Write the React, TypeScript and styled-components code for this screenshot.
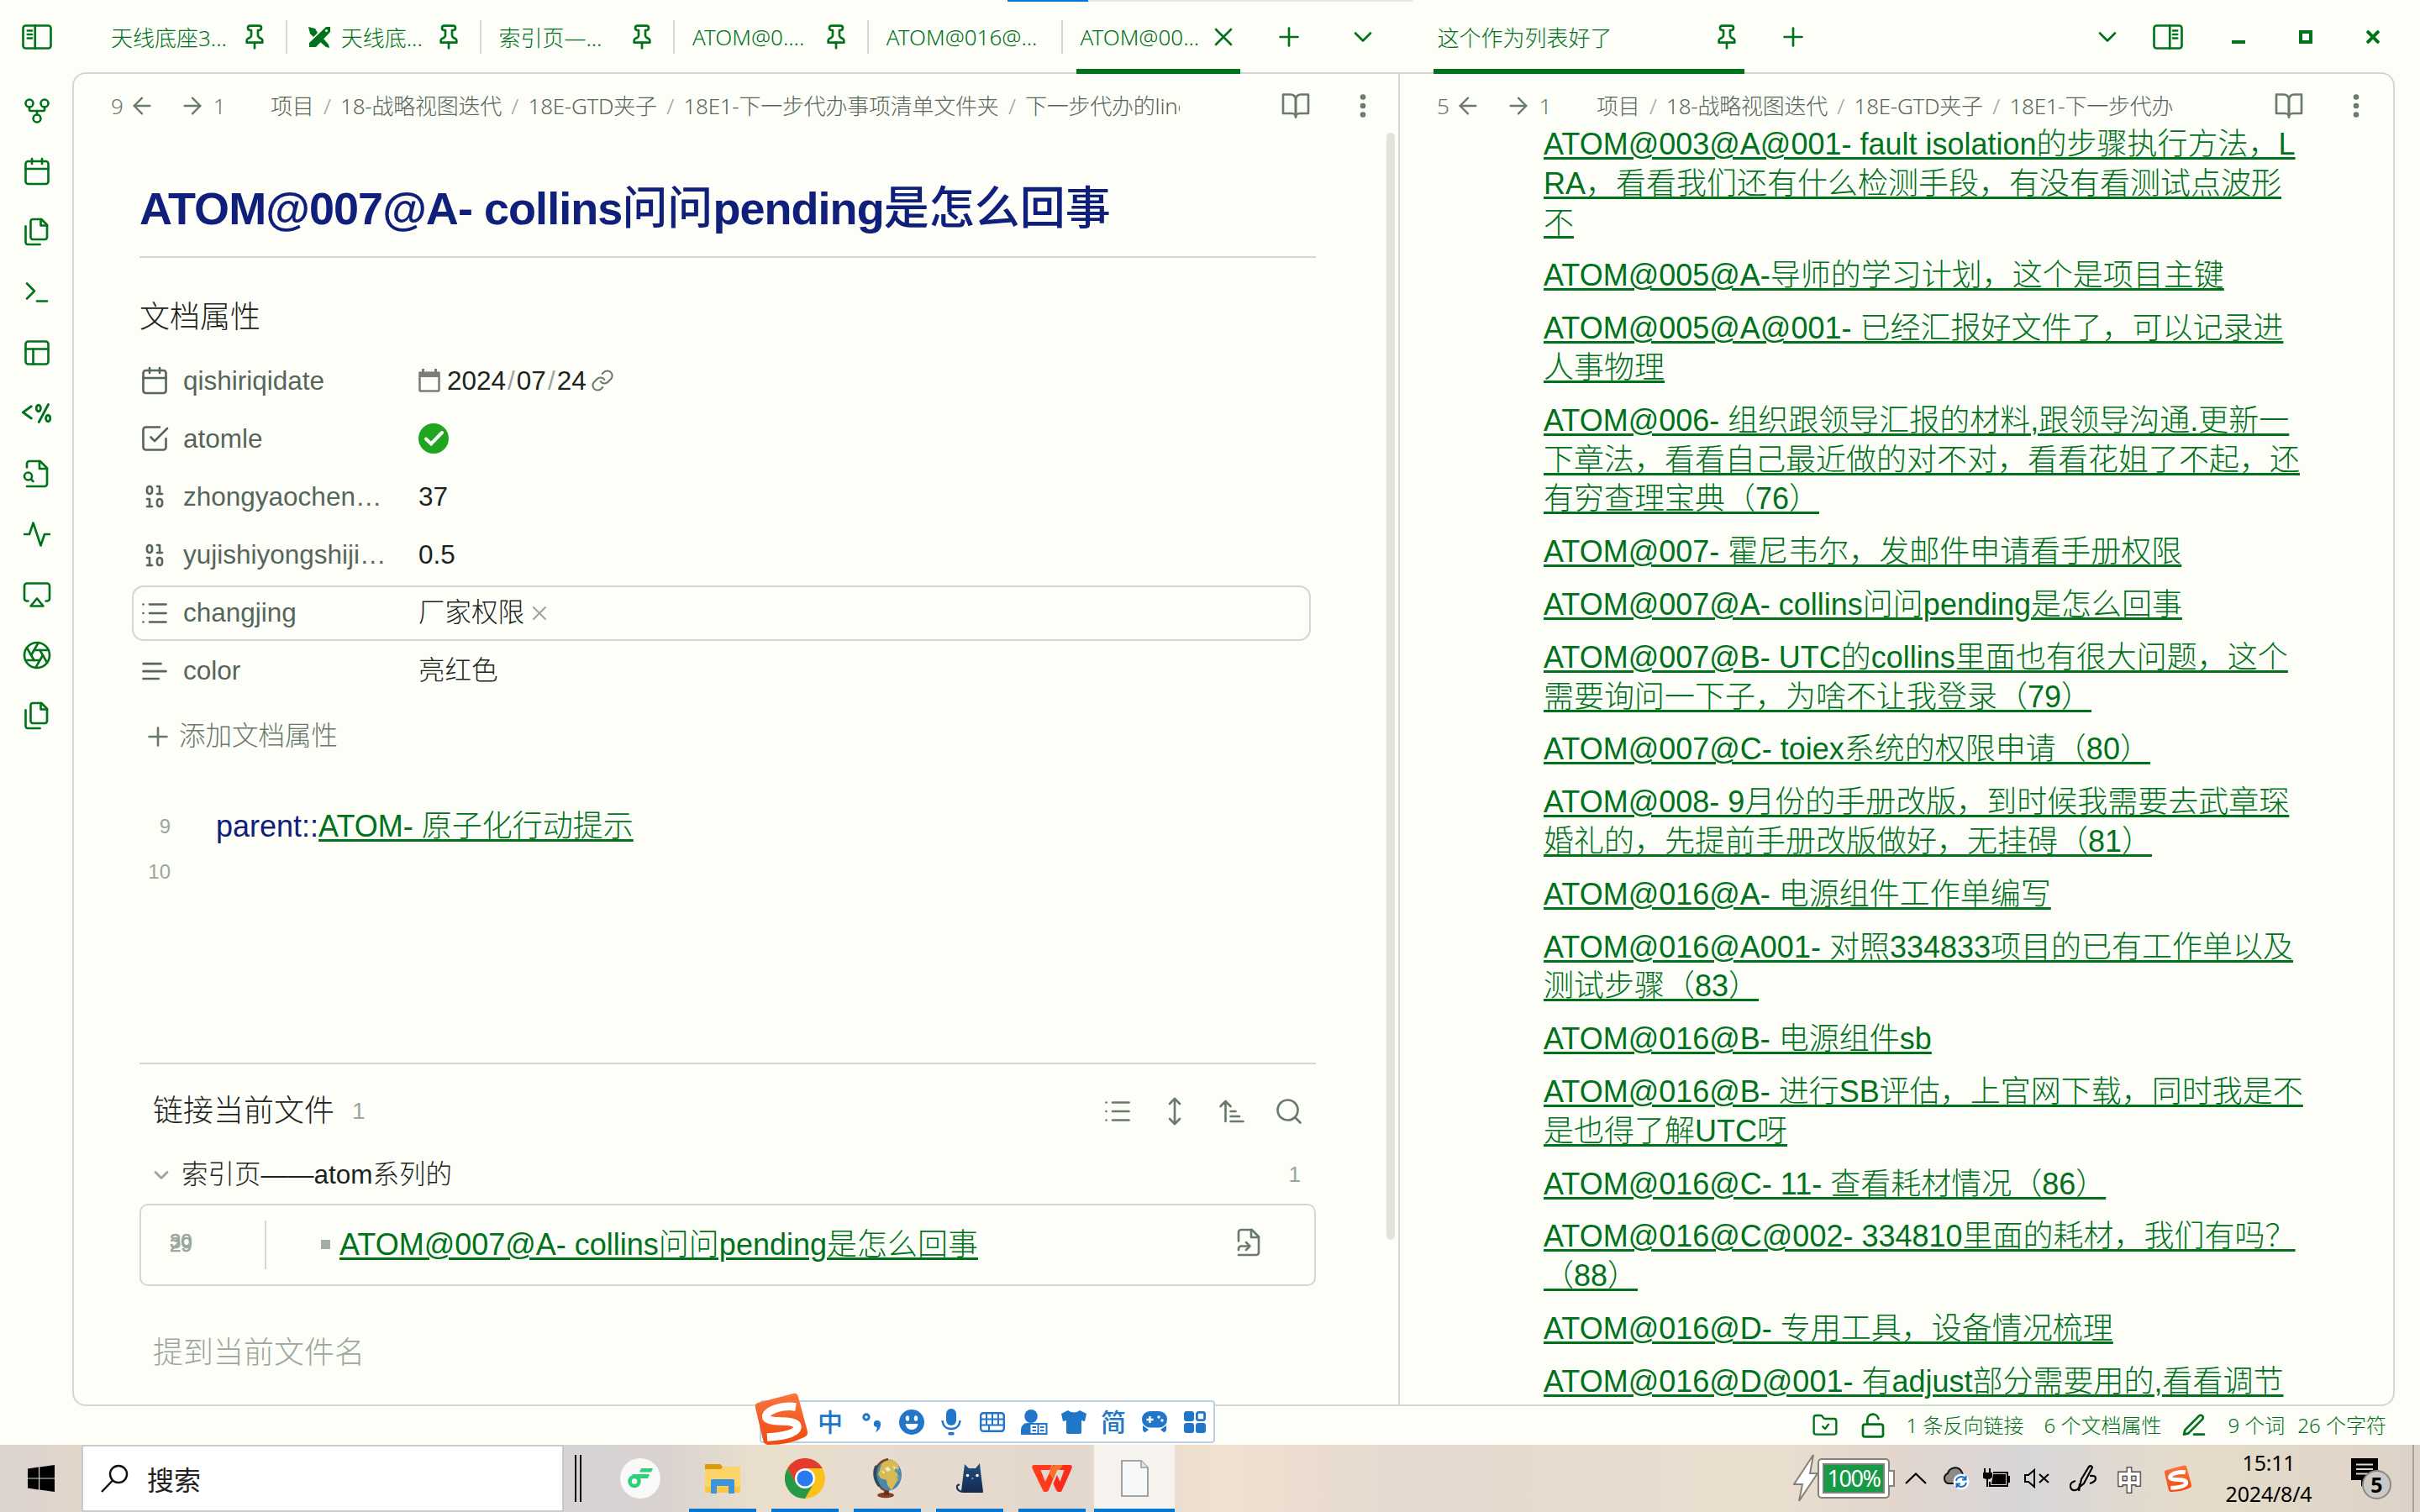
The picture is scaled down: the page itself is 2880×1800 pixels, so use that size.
import React from "react";
import styled, { createGlobalStyle } from "styled-components";
import {
  ArrowLeft,
  ArrowRight,
  Aperture,
  Binary,
  Calendar,
  ChevronDown,
  GitFork,
  Link as LinkIcon,
  List,
  LockOpen,
  MoreVertical,
  MoveVertical,
  PanelsTopLeft,
  Plus,
  Search,
  Terminal,
  X,
} from "lucide-react";

const C = {
  bg: "#fdfef8",
  green: "#00721b",
  line: "#d0d8d0",
  navy: "#10207a",
  text: "#1c241d",
  muted: "#56665a",
  icon: "#69796c",
  faint: "#9ba79d",
  blue: "#0078d7",
  ime: "#2176c9",
};

const SANS = `"Liberation Sans", "Noto Sans CJK SC", sans-serif`;
const UI = `"Noto Sans", "Noto Sans CJK SC", sans-serif`;

const Global = createGlobalStyle`
  * { box-sizing: border-box; }
  html, body { margin: 0; padding: 0; background: ${C.bg}; overflow: hidden; }
  svg { display: block; flex: none; }
`;

const Screen = styled.div`
  width: 2880px;
  height: 1800px;
  display: flex;
  flex-direction: column;
  overflow: hidden;
  background: ${C.bg};
  font-family: ${SANS};
  font-weight: 300;
  line-height: 1.3;
`;

/* ---------- icons ---------- */

type IconProps = { size?: number; sw?: number; children: React.ReactNode };
const Icon = ({ size = 36, sw = 1.75, children }: IconProps) => (
  <svg
    width={size}
    height={size}
    viewBox="0 0 24 24"
    fill="none"
    stroke="currentColor"
    strokeWidth={sw}
    strokeLinecap="round"
    strokeLinejoin="round"
  >
    {children}
  </svg>
);

const PinIcon = () => (
  <Icon size={32} sw={2}>
    <path d="M12 17v5" />
    <path d="M5 17h14v-1.76a2 2 0 0 0-1.11-1.79l-1.78-.9A2 2 0 0 1 15 10.76V6h1a2 2 0 0 0 0-4H8a2 2 0 0 0 0 4h1v4.76a2 2 0 0 1-1.11 1.79l-1.78.9A2 2 0 0 0 5 15.24Z" />
  </Icon>
);
const SidebarLeft = () => (
  <Icon>
    <rect x="1" y="3" width="22" height="18" rx="2" />
    <path d="M10.5 3v18M4.5 7H8M4.5 10H8M4.5 13H8" />
  </Icon>
);
const SidebarRight = () => (
  <Icon>
    <rect x="1" y="3" width="22" height="18" rx="2" />
    <path d="M13.5 3v18M16 7h3.5M16 10h3.5M16 13h3.5" />
  </Icon>
);
const FilesIcon = () => (
  <Icon>
    <path d="M15.5 2H8.6c-.4 0-.8.2-1.1.5-.3.3-.5.7-.5 1.1v12.8c0 .4.2.8.5 1.1.3.3.7.5 1.1.5h9.8c.4 0 .8-.2 1.1-.5.3-.3.5-.7.5-1.1V6.5L15.5 2z" />
    <path d="M3 7.6v12.8c0 .4.2.8.5 1.1.3.3.7.5 1.1.5h9.8" />
    <path d="M15 2v5h5" />
  </Icon>
);
const TemplaterIcon = () => (
  <Icon sw={1.9}>
    <path d="M7.500 6.500L0.900 11.200L7.500 16" />
    <path d="M21 5L13.500 19" />
    <ellipse cx="13.2" cy="8" rx="1.700" ry="2.500" />
    <ellipse cx="20.800" cy="16" rx="1.700" ry="2.500" />
  </Icon>
);
const FileSearchIcon = () => (
  <Icon>
    <path d="M4 22h14a2 2 0 0 0 2-2V7.5L14.5 2H6a2 2 0 0 0-2 2v3" />
    <path d="M14 2v6h6" />
    <circle cx="5" cy="14" r="3" />
    <path d="m9 18-1.5-1.5" />
  </Icon>
);
const ActivityIcon = () => (
  <Icon>
    <path d="M22 12h-4l-3 9L9 3l-3 9H2" />
  </Icon>
);
const AirplayIcon = () => (
  <Icon>
    <path d="M5 17H4a2 2 0 0 1-2-2V5a2 2 0 0 1 2-2h16a2 2 0 0 1 2 2v10a2 2 0 0 1-2 2h-1" />
    <path d="m12 15 5 6H7Z" />
  </Icon>
);
const BookIcon = () => (
  <Icon>
    <path d="M2 3h6a4 4 0 0 1 4 4v14a3 3 0 0 0-3-3H2z" />
    <path d="M22 3h-6a4 4 0 0 0-4 4v14a3 3 0 0 1 3-3h7z" />
  </Icon>
);
const CheckSquareIcon = () => (
  <Icon>
    <path d="m9 11 3 3L22 4" />
    <path d="M21 12v7a2 2 0 0 1-2 2H5a2 2 0 0 1-2-2V5a2 2 0 0 1 2-2h11" />
  </Icon>
);
const TextIcon = () => (
  <Icon>
    <path d="M17 6.1H3M21 12.1H3M15.1 18H3" />
  </Icon>
);
const SortIcon = () => (
  <Icon>
    <path d="m3 8 4-4 4 4M7 4v16M11 12h4M11 16h7M11 20h10" />
  </Icon>
);
const FileArrowIcon = () => (
  <Icon>
    <path d="M4 11V4a2 2 0 0 1 2-2h8.5L20 7.5V20a2 2 0 0 1-2 2H4" />
    <path d="M14 2v6h6" />
    <path d="m10 18 3-3-3-3" />
    <path d="M4 18v-1a2 2 0 0 1 2-2h6" />
  </Icon>
);
const CrossToolsIcon = () => (
  <svg width="28" height="28" viewBox="0 0 28 28" fill="currentColor">
    <path d="M1 2l8 2 3 5-5 5-4-4z" />
    <path d="M22 2h5v6L10 26H2v-5z" />
    <path d="M19 16l6 7 1 4-4-1-7-6z" />
    <circle cx="22.5" cy="6.5" r="1.5" fill={C.bg} />
  </svg>
);

/* ---------- title bar ---------- */

const TitleBar = styled.header`
  position: relative;
  z-index: 1;
  height: 88px;
  flex: none;
  display: flex;
  align-items: stretch;
  color: ${C.green};
  font: 300 26px ${UI};
`;

const LoadingBar = styled.div`
  position: absolute;
  top: 0;
  left: 1199px;
  width: 482px;
  height: 2px;
  background: linear-gradient(90deg, ${C.blue} 96px, #e5e5e3 96px);
`;

const Slot = styled.div<{ $w: number }>`
  width: ${(p) => p.$w}px;
  flex: none;
  display: flex;
  align-items: center;
  justify-content: center;
`;

const TabStrip = styled.div`
  display: flex;
  padding-left: 39.5px;
`;

const Tab = styled.div`
  width: 230.7px;
  flex: none;
  display: flex;
  align-items: center;
  padding-left: 4.5px;
`;

const ActiveTab = styled(Tab)<{ $w: number }>`
  width: ${(p) => p.$w}px;
  border-bottom: 6px solid ${C.green};
  padding-top: 6px;
`;

const TabText = styled.div<{ $w: number; $lead?: boolean }>`
  width: ${(p) => p.$w}px;
  padding-left: ${(p) => (p.$lead ? 3 : 0)}px;
  display: flex;
  align-items: center;
  gap: 12px;
  white-space: nowrap;
`;

const TabSep = styled.div`
  width: 2px;
  height: 40px;
  margin-left: 21px;
  background: ${C.line};
`;

const Fill = styled.div`
  flex: 1;
`;

const MinimizeMark = styled.div`
  width: 16px;
  height: 4px;
  margin-top: 12px;
  background: ${C.green};
`;
const MaximizeMark = styled.div`
  width: 16px;
  height: 16px;
  border: 4px solid ${C.green};
`;

/* ---------- main ---------- */

const Main = styled.div`
  height: 1588px;
  margin-top: -2px;
  flex: none;
  display: flex;
`;

const Ribbon = styled.nav`
  width: 86px;
  padding: 10px 0 0 2px;
  display: flex;
  flex-direction: column;
  align-items: center;
  color: ${C.green};
`;
const RibbonItem = styled.div`
  height: 72px;
  display: flex;
  align-items: center;
`;

const Frame = styled.main`
  width: 2764px;
  display: flex;
  border: 2px solid ${C.line};
  border-radius: 16px;
  overflow: hidden;
`;

const Pane = styled.section<{ $w?: number }>`
  ${(p) => (p.$w ? `width:${p.$w}px; border-right: 2px solid ${C.line};` : "flex:1;")}
  display: flex;
  flex-direction: column;
  min-width: 0;
  overflow: hidden;
`;

const PaneHeader = styled.div`
  height: 60px;
  flex: none;
  padding: 15px 0 0 42px;
  display: flex;
  align-items: center;
  font: 300 26px/44px ${UI};
  color: ${C.icon};
`;
const HistoryCount = styled.span<{ $w: number }>`
  width: ${(p) => p.$w}px;
  padding-left: 2px;
`;
const Crumbs = styled.div<{ $w: number }>`
  width: ${(p) => p.$w}px;
  margin-left: 45px;
  display: flex;
  overflow: hidden;
  white-space: nowrap;
  color: ${C.muted};
  letter-spacing: -0.25px;
`;
const Slash = styled.span`
  width: 31.6px;
  flex: none;
  text-align: center;
  color: ${C.faint};
`;
const HeaderTools = styled.div<{ $ml: number }>`
  margin-left: ${(p) => p.$ml}px;
  height: 36px;
  display: flex;
  gap: 44px;
`;

const PaneBody = styled.div`
  flex: 1;
  display: flex;
  justify-content: space-between;
  min-height: 0;
`;
const Scrollbar = styled.div`
  width: 10px;
  height: 1318px;
  margin: 10px 4px 0 0;
  border-radius: 5px;
  background: #e2e4dc;
`;
const Note = styled.div`
  width: 1400px;
  margin-left: 78px;
`;
const Title = styled.h1`
  margin: 0;
  height: 159px;
  padding-top: 60px;
  border-bottom: 2px solid ${C.line};
  font-size: 54px;
  line-height: 80px;
  font-weight: 700;
  letter-spacing: -0.95px;
  color: ${C.navy};
  white-space: nowrap;
`;
const Cjk = styled.span`
  font-weight: 500;
  letter-spacing: 0;
`;
const SectionTitle = styled.div`
  margin-top: 48px;
  font-size: 36px;
  line-height: 46px;
  color: ${C.text};
`;
const Props = styled.div`
  margin: 19px 0 0 -9px;
  display: flex;
  flex-direction: column;
  gap: 3.2px;
`;
const PropRow = styled.div<{ $focus?: boolean }>`
  width: 1403px;
  height: 66px;
  display: flex;
  align-items: center;
  padding-left: 7px;
  border: 2px solid ${(p) => (p.$focus ? C.line : "transparent")};
  border-radius: 14px;
  font-size: 31.5px;
  color: ${C.muted};
`;
const PropKey = styled.div`
  width: 280px;
  margin-left: 16px;
  white-space: nowrap;
`;
const PropValue = styled.div`
  display: flex;
  align-items: center;
  color: ${C.text};
`;
const DateSlash = styled.span`
  margin: 0 2px;
  color: ${C.faint};
`;
const Tail = styled.span<{ $ml: number }>`
  margin-left: ${(p) => p.$ml}px;
  color: ${C.faint};
`;
const DateText = styled.span`
  margin-left: 8px;
`;
const AddProp = styled.div`
  height: 46px;
  margin-top: 22px;
  padding-left: 4px;
  display: flex;
  align-items: center;
  gap: 7px;
  font-size: 31.5px;
  color: ${C.icon};
`;
const Editor = styled.div`
  height: 365px;
  padding-top: 57px;
`;
const Line = styled.div`
  height: 54px;
  display: flex;
  align-items: center;
  font-size: 36px;
  color: ${C.navy};
`;
const LineNo = styled.span`
  width: 37px;
  margin-right: 54px;
  text-align: right;
  font-size: 24px;
  color: ${C.faint};
`;
const Backlinks = styled.div`
  border-top: 2px solid ${C.line};
  padding-top: 33px;
`;
const BackHead = styled.div`
  height: 46px;
  padding: 0 14px 0 16px;
  display: flex;
  align-items: center;
  font-size: 36px;
  color: ${C.text};
`;
const Count = styled.span<{ $ml?: number; $fs?: number }>`
  margin-left: ${(p) => p.$ml ?? 0}px;
  font-size: ${(p) => p.$fs ?? 28}px;
  color: ${C.faint};
`;
const BackTools = styled.div`
  margin-left: auto;
  display: flex;
  gap: 32px;
  color: ${C.icon};
`;
const GroupRow = styled.div`
  height: 46px;
  margin-top: 30px;
  padding: 0 18px 0 12px;
  display: flex;
  align-items: center;
  justify-content: space-between;
  font-size: 31.5px;
  color: ${C.text};
`;
const GroupName = styled.div`
  display: flex;
  align-items: center;
  gap: 10px;
`;
const Chev = styled.span`
  color: ${C.faint};
`;
const MatchCard = styled.div`
  height: 98px;
  margin-top: 11px;
  padding: 0 60px 0 34px;
  display: flex;
  align-items: center;
  border: 2px solid ${C.line};
  border-radius: 10px;
  font-size: 36px;
  color: ${C.icon};
`;
const StackedNo = styled.div`
  position: relative;
  width: 113px;
  font-size: 24px;
  line-height: 28px;
  color: ${C.faint};
  -webkit-text-stroke: 0.6px ${C.faint};
`;
const StackedTop = styled.span`
  position: absolute;
  left: 0;
  top: -4px;
`;
const MatchRule = styled.div`
  width: 2px;
  height: 58px;
  background: ${C.line};
`;
const Bullet = styled.div`
  width: 11px;
  height: 11px;
  margin: 0 11px 0 65px;
  background: #a3aea4;
`;
const Push = styled.div`
  margin: 0 0 6px auto;
`;
const Unlinked = styled.div`
  margin: 57px 0 0 16px;
  font-size: 36px;
  line-height: 46px;
  color: ${C.faint};
`;
const Anchor = styled.a`
  color: ${C.green};
  text-decoration: underline;
  text-decoration-thickness: 3px;
  text-underline-offset: 3px;
  white-space: pre;
`;
const LinkList = styled.div`
  padding: 1px 0 0 171px;
  font-size: 36px;
  line-height: 46.8px;
  display: flex;
  flex-direction: column;
  gap: 16px;
`;

/* ---------- status bar ---------- */

const StatusBar = styled.footer`
  height: 46px;
  flex: none;
  display: flex;
  align-items: center;
  justify-content: flex-end;
  padding-right: 40px;
  color: ${C.green};
  font: 300 24px/46px ${UI};
`;
const StatusItem = styled.div<{ $mr: number }>`
  margin-right: ${(p) => p.$mr}px;
  white-space: nowrap;
`;

/* ---------- input method bar ---------- */

const ImeBar = styled.div`
  position: absolute;
  left: 904px;
  top: 1667px;
  width: 542px;
  height: 51px;
  padding-left: 58px;
  display: flex;
  align-items: center;
  background: #fff;
  border: 2px solid #bccfe4;
  border-radius: 4px;
  color: ${C.ime};
  z-index: 3;
`;
const ImeLogo = styled.div`
  position: absolute;
  left: -9px;
  top: -13px;
`;
const ImeHan = styled.span`
  font: 500 30px/44px "Noto Sans CJK SC", sans-serif;
  margin-top: -3px;
`;

/* ---------- taskbar ---------- */

const Taskbar = styled.div`
  height: 80px;
  flex: none;
  display: flex;
  align-items: stretch;
  background: linear-gradient(
    90deg,
    #dcd3cf 0,
    #e4d6c9 120px,
    #d7d3d4 700px,
    #d9d2d0 790px,
    #eadfcc 900px,
    #e7dbcf 1060px,
    #e4d8ce 1280px,
    #efe2d1 1460px,
    #e5d8cf 1680px,
    #ebdfcf 2100px,
    #e1d5cd 2260px,
    #d8d6d8 2420px,
    #e6dcc8 2620px,
    #ddd2c8 2880px
  );
`;
const StartButton = styled.div`
  width: 97px;
  display: flex;
  align-items: center;
  justify-content: center;
`;
const SearchBox = styled.div`
  width: 574px;
  padding-left: 20px;
  display: flex;
  align-items: center;
  gap: 22px;
  background: #fff;
  border: 2px solid #cacaca;
  font: 400 32px/40px "Noto Sans CJK SC", sans-serif;
  color: #222;
`;
const Grip = styled.div`
  width: 8px;
  height: 56px;
  margin: 12px 0 0 13px;
  border-left: 2px solid #000;
  border-right: 2px solid #000;
`;
const Task = styled.div<{ $w: number; $ml: number; $run?: boolean; $on?: boolean }>`
  width: ${(p) => p.$w}px;
  margin-left: ${(p) => p.$ml}px;
  flex: none;
  display: flex;
  align-items: center;
  justify-content: center;
  padding-top: 4px;
  border-bottom: 4px solid ${(p) => (p.$run ? C.blue : "transparent")};
  background: ${(p) => (p.$on ? "#f6f2ed" : "transparent")};
  background-clip: padding-box;
`;
const TaskExtra = styled.div`
  width: 16px;
  height: 4px;
  align-self: flex-end;
  background: #62aee6;
`;
const Tray = styled.div`
  margin-left: auto;
  display: flex;
  align-items: center;
`;
const TraySlot = styled.div<{ $w: number }>`
  width: ${(p) => p.$w}px;
  display: flex;
  justify-content: center;
`;
const TrayHan = styled.span`
  font: 700 30px/34px "Noto Sans CJK SC", sans-serif;
  color: #fff;
  -webkit-text-stroke: 3px #55504c;
  paint-order: stroke fill;
`;
const Battery = styled.div`
  width: 122px;
  display: flex;
  align-items: center;
`;
const BatteryBody = styled.div`
  width: 84px;
  height: 46px;
  border: 5px solid #fff;
  outline: 2px solid #86807b;
  outline-offset: -1px;
  border-radius: 4px;
  background: #169a45;
  color: #fff;
  font: 400 27px/36px ${UI};
  letter-spacing: -1.4px;
  text-align: center;
  box-shadow: inset 0 0 0 2px #86807b;
`;
const BatteryCap = styled.div`
  width: 7px;
  height: 20px;
  background: #fff;
  border: 2px solid #86807b;
  border-left: 0;
`;
const Clock = styled.div`
  width: 130px;
  text-align: center;
  font: 400 25px/37px ${UI};
  letter-spacing: -0.2px;
  color: #000;
`;
const Notice = styled.div`
  position: relative;
  width: 73px;
  height: 48px;
  margin-left: 33px;
`;
const NoticeBadge = styled.div`
  position: absolute;
  left: 13px;
  top: 14px;
  width: 35px;
  height: 35px;
  border-radius: 50%;
  border: 2px solid #8a8683;
  background: #cbc8c5;
  font: 700 25px/31px ${UI};
  text-align: center;
  color: #000;
`;
const DesktopEdge = styled.div`
  width: 2px;
  height: 80px;
  margin-right: 7px;
  background: #aaa39b;
`;

/* ---------- logos ---------- */

const SogouLogo = ({ size }: { size: number }) => (
  <svg width={size} height={size} viewBox="0 0 66 66">
    <defs>
      <linearGradient id={`sg${size}`} x1="0" y1="0" x2="0" y2="1">
        <stop offset="0" stopColor="#fa7440" />
        <stop offset="1" stopColor="#f04a10" />
      </linearGradient>
    </defs>
    <path
      d="M5 14 L47 3 Q52 2 53 7 L64 48 Q65 53 60 55 Q42 64 18 64 Q12 64 11 58 L2 20 Q1 15 5 14Z"
      fill={`url(#sg${size})`}
    />
    <path
      d="M50 19 Q38 17 26 21 Q13 26 15 32 Q17 36 34 36 Q52 36 52 43 Q51 53 16 55"
      fill="none"
      stroke="#fff"
      strokeWidth="9.5"
    />
  </svg>
);

const WindowsLogo = () => (
  <svg width="32" height="32" viewBox="0 0 32 32" fill="#000">
    <path d="M0 4.4 13 2.6V15.4H0zM14.2 2.4 32 0V15.4H14.2zM0 16.6H13V29.4L0 27.6zM14.2 16.6H32V32L14.2 29.6z" />
  </svg>
);
const GreenApp = () => (
  <svg width="48" height="48" viewBox="0 0 48 48">
    <circle cx="24" cy="24" r="24" fill="#f8f9f8" />
    <circle cx="17" cy="27.5" r="5.5" fill="none" stroke="#2fd178" strokeWidth="4.6" />
    <path d="M14 19h21l-2 5H20z M25 12h14l-2 4.6H23z" fill="#2fd178" />
  </svg>
);
const FolderApp = () => (
  <svg width="44" height="36" viewBox="0 0 44 36">
    <path d="M1 2q0-1 1-1h17l3 3-2 4H1z" fill="#dd9d0a" />
    <path d="M1 7h19l3-3h19q1 0 1 1v28q0 2-2 2H3q-2 0-2-2z" fill="#fdd469" />
    <path d="M1 28h42v5q0 2-2 2H3q-2 0-2-2z" fill="#fbc73c" />
    <path d="M8 36V21q0-2 2-2h24q2 0 2 2v15h-7v-9H15v9z" fill="#3c94dc" />
  </svg>
);
const ChromeApp = () => (
  <svg width="48" height="48" viewBox="0 0 48 48">
    <circle cx="24" cy="24" r="24" fill="#fcc21b" />
    <path d="M3.200 12A24 24 0 0 1 44.800 12H24L13.600 30z" fill="#e33b2e" />
    <path d="M3.200 12A24 24 0 0 0 24 48L34.400 30 13.600 30z" fill="#279847" />
    <circle cx="24" cy="24" r="12" fill="#fff" />
    <circle cx="24" cy="24" r="9.6" fill="#2b7bf0" />
  </svg>
);
const GlobeApp = () => (
  <svg width="38" height="48" viewBox="0 0 38 48">
    <ellipse cx="17" cy="44" rx="10" ry="3.2" fill="#85401c" />
    <path d="M15 38h6v6h-6z" fill="#6c3014" />
    <ellipse cx="20.500" cy="20" rx="15.500" ry="18.500" fill="#4b87ad" />
    <path d="M12 7q4-5 11-5 7 1 9 6l1 5-6 2 4 3 2 6-4 6-5 8-5-6-1-6-7-2-3-5 2-5z" fill="#d6bb55" />
    <path d="M16 12l4-2 3 4-4 2zM26 9l4 3-3 1zM12 15l4 1-1 3z" fill="#f1edc0" />
    <path d="M28 12l5 2-1 4-4-2zM30 22l5-2-2 9z" fill="#5f97b8" />
    <path d="M20 1Q5 4 5 20q1 14 12 19" fill="none" stroke="#7b4421" strokeWidth="2.4" />
    <path d="M4 9Q-1 22 8 34l3-1Q3 21 8 8z" fill="#2f4a5e" />
  </svg>
);
const CatApp = () => (
  <svg width="34" height="36" viewBox="0 0 34 36">
    <defs>
      <linearGradient id="cat" x1="0" y1="0" x2="0" y2="1">
        <stop offset="0" stopColor="#234f82" />
        <stop offset="1" stopColor="#14284d" />
      </linearGradient>
    </defs>
    <path d="M11 1l5 5h8l5-6 1 10 3 24q0 1-1 1H9q-2 0-2-2z" fill="url(#cat)" />
    <path d="M9 34Q1 33 2 27q1-2 3-1" fill="none" stroke="#1a3560" strokeWidth="2.2" />
    <circle cx="14.500" cy="14.500" r="1.800" fill="#fff" />
    <circle cx="26" cy="14.500" r="1.800" fill="#fff" />
    <path d="M19 18h2.500" stroke="#cfd8e6" strokeWidth="1" />
  </svg>
);
const WpsApp = () => (
  <svg width="48" height="32" viewBox="0 0 48 32">
    <path d="M3 0H24L22 6H10.500L16 20 25 0H36L33 6H30L20 30Q19 32 17.500 32H15Q13.500 32 13 30L.5 4Q-.5 0 3 0Z" fill="#ff3b1c" />
    <path d="M45 0H31L29 6H38.500L33.500 20 30 12 25.500 22 29 30Q30 32 31.500 32H34Q35.500 32 36 30L47.500 4Q48.500 0 45 0Z" fill="#fb2a1b" />
    <path d="M27 0H37L33 6H30L25 17 21 10 25 2Z" fill="#f5742a" />
  </svg>
);
const BlankDocApp = () => (
  <svg width="33" height="44" viewBox="0 0 33 44">
    <path d="M1 1h23l8 8v34H1z" fill="#f6f8fa" stroke="#8b8b8b" strokeWidth="1.600" />
    <path d="M24 1v8h8" fill="#e4e4e4" stroke="#9a9a9a" strokeWidth="1.400" />
  </svg>
);

/* ---------- data ---------- */

const pinned: { text: string; icon?: boolean; pin: boolean }[] = [
  { text: "天线底座3...", pin: true },
  { text: "天线底...", icon: true, pin: true },
  { text: "索引页—...", pin: true },
  { text: "ATOM@0....", pin: true },
  { text: "ATOM@016@...", pin: false },
];

const ribbon = [
  <GitFork size={36} strokeWidth={1.75} />,
  <Calendar size={36} strokeWidth={1.75} />,
  <FilesIcon />,
  <Terminal size={36} strokeWidth={1.75} />,
  <PanelsTopLeft size={36} strokeWidth={1.75} />,
  <TemplaterIcon />,
  <FileSearchIcon />,
  <ActivityIcon />,
  <AirplayIcon />,
  <Aperture size={36} strokeWidth={1.75} />,
  <FilesIcon />,
];

const links = [
  "ATOM@003@A@001- fault isolation的步骤执行方法，L\nRA，看看我们还有什么检测手段，有没有看测试点波形\n不",
  "ATOM@005@A-导师的学习计划，这个是项目主键",
  "ATOM@005@A@001- 已经汇报好文件了，可以记录进\n人事物理",
  "ATOM@006- 组织跟领导汇报的材料,跟领导沟通.更新一\n下章法，看看自己最近做的对不对，看看花姐了不起，还\n有穷查理宝典（76）",
  "ATOM@007- 霍尼韦尔，发邮件申请看手册权限",
  "ATOM@007@A- collins问问pending是怎么回事",
  "ATOM@007@B- UTC的collins里面也有很大问题，这个\n需要询问一下子，为啥不让我登录（79）",
  "ATOM@007@C- toiex系统的权限申请（80）",
  "ATOM@008- 9月份的手册改版，到时候我需要去武章琛\n婚礼的，先提前手册改版做好，无挂碍（81）",
  "ATOM@016@A- 电源组件工作单编写",
  "ATOM@016@A001- 对照334833项目的已有工作单以及\n测试步骤（83）",
  "ATOM@016@B- 电源组件sb",
  "ATOM@016@B- 进行SB评估，上官网下载，同时我是不\n是也得了解UTC呀",
  "ATOM@016@C- 11- 查看耗材情况（86）",
  "ATOM@016@C@002- 334810里面的耗材，我们有吗？\n（88）",
  "ATOM@016@D- 专用工具，设备情况梳理",
  "ATOM@016@D@001- 有adjust部分需要用的,看看调节",
];

const Header = ({ back, crumbs, w, ml }: { back: string; crumbs: string[]; w: number; ml: number }) => (
  <PaneHeader>
    <HistoryCount $w={23}>{back}</HistoryCount>
    <ArrowLeft size={32} strokeWidth={1.75} />
    <Slot $w={28} />
    <ArrowRight size={32} strokeWidth={1.75} />
    <HistoryCount $w={32}>&nbsp;1</HistoryCount>
    <Crumbs $w={w}>
      {crumbs.map((c, i) => (
        <React.Fragment key={c}>
          {i > 0 && <Slash>/</Slash>}
          <span>{c}</span>
        </React.Fragment>
      ))}
    </Crumbs>
    <HeaderTools $ml={ml}>
      <BookIcon />
      <MoreVertical size={36} strokeWidth={2.4} />
    </HeaderTools>
  </PaneHeader>
);

const ImeTools = () => (
  <>
    <Slot $w={48}><ImeHan>中</ImeHan></Slot>
    <Slot $w={50}>
      <svg width="24" height="28" viewBox="0 0 24 28">
        <circle cx="6" cy="8" r="3.200" fill="none" stroke={C.ime} strokeWidth="3" />
        <path d="M19 12a3.800 3.800 0 0 1 4 4c0 5-2 8-6 10 1-2 2-4 1.600-6a3.900 3.900 0 0 1 .4-8z" fill={C.ime} />
      </svg>
    </Slot>
    <Slot $w={46}>
      <svg width="30" height="30" viewBox="0 0 30 30">
        <circle cx="15" cy="15" r="15" fill={C.ime} />
        <ellipse cx="10" cy="10.500" rx="2.200" ry="3.300" fill="#fff" />
        <ellipse cx="20" cy="10.500" rx="2.200" ry="3.300" fill="#fff" />
        <path d="M7.500 17h15q-1 7-7.500 7t-7.500-7z" fill="#fff" />
      </svg>
    </Slot>
    <Slot $w={48}>
      <svg width="24" height="32" viewBox="0 0 24 32" fill="none" stroke={C.ime} strokeWidth="2.400">
        <rect x="6" y="0" width="12" height="20" rx="6" fill={C.ime} stroke="none" />
        <path d="M1.500 14q1 10 10.500 10t10.500-10" />
        <rect x="8.500" y="28" width="7" height="3.500" rx="1" fill={C.ime} stroke="none" />
      </svg>
    </Slot>
    <Slot $w={50}>
      <svg width="30" height="24" viewBox="0 0 30 24">
        <rect x="1.200" y="1.200" width="27.600" height="21.600" rx="3" fill="none" stroke={C.ime} strokeWidth="2.400" />
        <path
          d="M2 8.500h26M2 15.500h26M8 2v14M15 2v13.500M22 2v14M11 16v6"
          stroke={C.ime}
          strokeWidth="2"
        />
      </svg>
    </Slot>
    <Slot $w={50}>
      <svg width="32" height="30" viewBox="0 0 32 30">
        <ellipse cx="12" cy="8" rx="7.800" ry="8" fill={C.ime} />
        <path d="M0 30V24q1-8 8-8h5v14z" fill={C.ime} />
        <path d="M10.500 17h20v12h-20zM20.500 17v12M13.500 21h4.500M13.500 25h4.500M23 21h4.500M23 25h4.500" fill="#fff" stroke={C.ime} strokeWidth="2" />
      </svg>
    </Slot>
    <Slot $w={44}>
      <svg width="30" height="28" viewBox="0 0 30 28" fill={C.ime}>
        <path d="M8 0q7 5 14 0l8 4-2 9-4-1v14q0 2-2 2H8q-2 0-2-2V12l-4 1L0 4z" />
      </svg>
    </Slot>
    <Slot $w={50}><ImeHan>简</ImeHan></Slot>
    <Slot $w={48}>
      <svg width="30" height="25" viewBox="0 0 30 25">
        <rect x="0" y="0" width="30" height="19.500" rx="9.500" fill={C.ime} />
        <path d="M1 17l7 5-4 3q-3 0-3-4zM29 17l-7 5 4 3q3 0 3-4z" fill={C.ime} />
        <path d="M5.500 10h8M9.500 6v8" stroke="#fff" strokeWidth="2.400" />
        <circle cx="20" cy="7" r="1.700" fill="#fff" />
        <circle cx="24" cy="11" r="1.700" fill="#fff" />
      </svg>
    </Slot>
    <Slot $w={48}>
      <svg width="26" height="26" viewBox="0 0 26 26" fill={C.ime}>
        <rect width="12" height="12" rx="3" />
        <rect y="14" width="12" height="12" rx="3" />
        <rect x="14" y="14" width="12" height="12" rx="3" />
        <rect x="15.400" y="1.400" width="9.200" height="9.200" rx="2" fill="none" stroke={C.ime} strokeWidth="2.800" />
      </svg>
    </Slot>
  </>
);

export default function App() {
  return (
    <Screen>
      <Global />
      <TitleBar>
        <LoadingBar />
        <Slot $w={88}><SidebarLeft /></Slot>
        <TabStrip>
          {pinned.map((t) => (
            <Tab key={t.text}>
              <TabText $w={t.pin ? 155 : 187} $lead={t.icon}>
                {t.icon && <CrossToolsIcon />}
                {t.icon ? <span>{t.text}</span> : t.text}
              </TabText>
              {t.pin && <PinIcon />}
              <TabSep />
            </Tab>
          ))}
          <ActiveTab $w={195}>
            <TabText $w={153}>ATOM@00...</TabText>
            <X size={36} strokeWidth={1.75} />
          </ActiveTab>
        </TabStrip>
        <Slot $w={116}><Plus size={36} strokeWidth={1.75} /></Slot>
        <Slot $w={60}><ChevronDown size={36} strokeWidth={1.75} /></Slot>
        <Slot $w={54} />
        <ActiveTab $w={370}>
          <TabText $w={329}>这个作为列表好了</TabText>
          <PinIcon />
        </ActiveTab>
        <Slot $w={116}><Plus size={36} strokeWidth={1.75} /></Slot>
        <Fill />
        <Slot $w={72}><ChevronDown size={36} strokeWidth={1.75} /></Slot>
        <Slot $w={72}><SidebarRight /></Slot>
        <Slot $w={8} />
        <Slot $w={80}><MinimizeMark /></Slot>
        <Slot $w={80}><MaximizeMark /></Slot>
        <Slot $w={80}>
          <svg width="16" height="16" viewBox="0 0 16 16" stroke={C.green} strokeWidth="4">
            <path d="M1 1l14 14M15 1L1 15" />
          </svg>
        </Slot>
        <Slot $w={16} />
      </TitleBar>

      <Main>
        <Ribbon>
          {ribbon.map((r, i) => (
            <RibbonItem key={i}>{r}</RibbonItem>
          ))}
        </Ribbon>
        <Frame>
          <Pane $w={1578}>
            <Header
              back="9"
              w={1082}
              ml={120}
              crumbs={["项目", "18-战略视图迭代", "18E-GTD夹子", "18E1-下一步代办事项清单文件夹", "下一步代办的line"]}
            />
            <PaneBody>
              <Note>
                <Title>
                  ATOM@007@A- collins<Cjk>问问</Cjk>pending<Cjk>是怎么回事</Cjk>
                </Title>
                <SectionTitle>文档属性</SectionTitle>
                <Props>
                  <PropRow>
                    <Calendar size={36} strokeWidth={1.75} />
                    <PropKey>qishiriqidate</PropKey>
                    <PropValue>
                      <svg width="26" height="28" viewBox="0 0 26 28">
                        <path d="M1.500 5h23v20.500q0 1-1 1h-21q-1 0-1-1z" fill="none" stroke="#7b7d7a" strokeWidth="2.600" />
                        <path d="M1 3.500h24V10H1zM4 0h3v4H4zM19 0h3v4h-3z" fill="#7b7d7a" />
                      </svg>
                      <DateText>
                        2024<DateSlash>/</DateSlash>07<DateSlash>/</DateSlash>24
                      </DateText>
                      <Tail $ml={5}><LinkIcon size={28} strokeWidth={1.75} color={C.icon} /></Tail>
                    </PropValue>
                  </PropRow>
                  <PropRow>
                    <CheckSquareIcon />
                    <PropKey>atomle</PropKey>
                    <PropValue>
                      <svg width="36" height="36" viewBox="0 0 36 36">
                        <circle cx="18" cy="18" r="18" fill="#1fa51f" />
                        <path d="M9 18.500l6 6L28 11" fill="none" stroke="#fff" strokeWidth="4" strokeLinecap="round" />
                      </svg>
                    </PropValue>
                  </PropRow>
                  <PropRow>
                    <Binary size={36} strokeWidth={1.75} />
                    <PropKey>zhongyaochen…</PropKey>
                    <PropValue>37</PropValue>
                  </PropRow>
                  <PropRow>
                    <Binary size={36} strokeWidth={1.75} />
                    <PropKey>yujishiyongshiji…</PropKey>
                    <PropValue>0.5</PropValue>
                  </PropRow>
                  <PropRow $focus>
                    <List size={36} strokeWidth={1.75} />
                    <PropKey>changjing</PropKey>
                    <PropValue>
                      厂家权限
                      <Tail $ml={4}><X size={28} strokeWidth={1.75} /></Tail>
                    </PropValue>
                  </PropRow>
                  <PropRow>
                    <TextIcon />
                    <PropKey>color</PropKey>
                    <PropValue>亮红色</PropValue>
                  </PropRow>
                </Props>
                <AddProp>
                  <Plus size={36} strokeWidth={1.75} />
                  添加文档属性
                </AddProp>
                <Editor>
                  <Line>
                    <LineNo>9</LineNo>
                    parent::
                    <Anchor>ATOM- 原子化行动提示</Anchor>
                  </Line>
                  <Line>
                    <LineNo>10</LineNo>
                  </Line>
                </Editor>
                <Backlinks>
                  <BackHead>
                    链接当前文件
                    <Count $ml={21}>1</Count>
                    <BackTools>
                      <List size={36} strokeWidth={1.75} />
                      <MoveVertical size={36} strokeWidth={1.75} />
                      <SortIcon />
                      <Search size={36} strokeWidth={1.75} />
                    </BackTools>
                  </BackHead>
                  <GroupRow>
                    <GroupName>
                      <Chev><ChevronDown size={28} strokeWidth={2.4} /></Chev>
                      索引页——atom系列的
                    </GroupName>
                    <Count $fs={26}>1</Count>
                  </GroupRow>
                  <MatchCard>
                    <StackedNo>
                      29
                      <StackedTop>30</StackedTop>
                    </StackedNo>
                    <MatchRule />
                    <Bullet />
                    <Anchor>ATOM@007@A- collins问问pending是怎么回事</Anchor>
                    <Push><FileArrowIcon /></Push>
                  </MatchCard>
                  <Unlinked>提到当前文件名</Unlinked>
                </Backlinks>
              </Note>
              <Scrollbar />
            </PaneBody>
          </Pane>
          <Pane>
            <Header back="5" w={687} ml={119} crumbs={["项目", "18-战略视图迭代", "18E-GTD夹子", "18E1-下一步代办事项"]} />
            <LinkList>
              {links.map((l, i) => (
                <div key={i}>
                  <Anchor>{l}</Anchor>
                </div>
              ))}
            </LinkList>
          </Pane>
        </Frame>
      </Main>

      <StatusBar>
        <StatusItem $mr={25}>
          <Icon size={32} sw={1.75}>
            <path d="M4 20h16a2 2 0 0 0 2-2V8a2 2 0 0 0-2-2h-7.900a2 2 0 0 1-1.690-.9L9.600 3.900A2 2 0 0 0 7.930 3H4a2 2 0 0 0-2 2v13c0 1.100.9 2 2 2Z" />
            <path d="m10 13 2 2 3-4" />
          </Icon>
        </StatusItem>
        <StatusItem $mr={23}><LockOpen size={32} strokeWidth={2} /></StatusItem>
        <StatusItem $mr={24}>1 条反向链接</StatusItem>
        <StatusItem $mr={23}>6 个文档属性</StatusItem>
        <StatusItem $mr={24}>
          <Icon size={32} sw={2}>
            <path d="M12 20h9" />
            <path d="M16.500 3.500a2.120 2.120 0 0 1 3 3L7 19l-4 1 1-4Z" />
          </Icon>
        </StatusItem>
        <StatusItem $mr={15}>9 个词</StatusItem>
        <StatusItem $mr={0}>26 个字符</StatusItem>
      </StatusBar>

      <ImeBar>
        <ImeLogo><SogouLogo size={66} /></ImeLogo>
        <ImeTools />
      </ImeBar>

      <Taskbar>
        <StartButton><WindowsLogo /></StartButton>
        <SearchBox>
          <svg width="34" height="34" viewBox="0 0 34 34" fill="none" stroke="#111" strokeWidth="2.400">
            <circle cx="22" cy="12" r="10" />
            <path d="M15 19.500L2 33" />
          </svg>
          搜索
        </SearchBox>
        <Grip />
        <Task $w={80} $ml={30}><GreenApp /></Task>
        <Task $w={80} $ml={18} $run><FolderApp /></Task>
        <Task $w={80} $ml={18} $run><ChromeApp /></Task>
        <Task $w={80} $ml={18} $run><GlobeApp /></Task>
        <Task $w={80} $ml={18} $run><CatApp /></Task>
        <Task $w={80} $ml={18} $run><WpsApp /></Task>
        <Task $w={96} $ml={10} $run $on><BlankDocApp /></Task>
        <Tray>
          <Battery>
            <svg width="30" height="58" viewBox="0 0 30 58">
              <path d="M24 1L1 36h10L7 56 29 23H20z" fill="#fff" stroke="#86807b" strokeWidth="2" />
            </svg>
            <BatteryBody>100%</BatteryBody>
            <BatteryCap />
          </Battery>
          <TraySlot $w={48}>
            <svg width="26" height="14" viewBox="0 0 26 14" fill="none" stroke="#000" strokeWidth="2.200">
              <path d="M1 13L13 1.500 25 13" />
            </svg>
          </TraySlot>
          <TraySlot $w={48}>
            <svg width="34" height="28" viewBox="0 0 34 28">
              <path d="M7 20a6.500 6.500 0 0 1 0-12A9 9 0 0 1 23 5q3 4 2 12L14 20z" fill="#8c8a88" stroke="#111" strokeWidth="2" />
              <circle cx="23" cy="18" r="9.500" fill="#fff" />
              <path d="M17 17a6 6 0 0 1 11-2M29 19a6 6 0 0 1-11 2M28.500 11v4.500H24M17.500 25v-4.500H22" fill="none" stroke="#1672c8" strokeWidth="2" />
            </svg>
          </TraySlot>
          <TraySlot $w={48}>
            <svg width="32" height="24" viewBox="0 0 32 24" fill="none" stroke="#000" strokeWidth="2">
              <path d="M2 0v5M8 0v5M0 6h10v3q0 3-5 3t-5-3zM5 12v10" fill="#000" />
              <path d="M12 5h17v16H8v-5" />
              <path d="M13 8h13v10H11z" fill="#000" />
              <path d="M31 9v8" />
            </svg>
          </TraySlot>
          <TraySlot $w={48}>
            <svg width="30" height="24" viewBox="0 0 30 24" fill="none" stroke="#000" strokeWidth="2">
              <path d="M1 8h4l7-6v20l-7-6H1zM18 7l11 10M29 7L18 17" />
            </svg>
          </TraySlot>
          <TraySlot $w={62}>
            <svg width="32" height="32" viewBox="0 0 32 32" fill="none" stroke="#000" strokeWidth="2.200">
              <path d="M12 26l2-9 9-15q3-2 4 1L17 22zM12 26l-1 5M7 19q-7 2-6 7t6 4 5-8M24 13q7-1 7 3t-7 6" />
            </svg>
          </TraySlot>
          <TraySlot $w={48}><TrayHan>中</TrayHan></TraySlot>
          <TraySlot $w={68}><SogouLogo size={34} /></TraySlot>
          <Slot $w={9} />
          <Clock>
            <div>15:11</div>
            <div>2024/8/4</div>
          </Clock>
          <Notice>
            <svg width="32" height="36" viewBox="0 0 32 36">
              <path d="M0 0h32v26H18l-6 8v-8H0z" fill="#000" />
              <path d="M6 7.500h20M6 13h20M6 18.500h14" stroke="#e3d9c8" strokeWidth="2" />
            </svg>
            <NoticeBadge>5</NoticeBadge>
          </Notice>
          <DesktopEdge />
        </Tray>
      </Taskbar>
    </Screen>
  );
}
